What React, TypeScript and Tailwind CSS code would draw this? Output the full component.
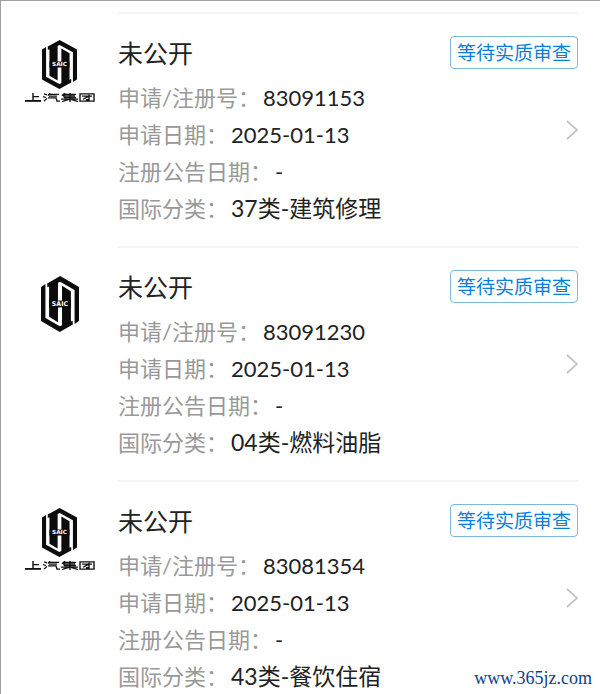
import React from "react";

type Trademark = {
  regNo: string;
  applyDate: string;
  noticeDate: string;
  category: string;
  withName: boolean;
};

const trademarks: Trademark[] = [
  { regNo: "83091153", applyDate: "2025-01-13", noticeDate: "-", category: "37类-建筑修理", withName: true },
  { regNo: "83091230", applyDate: "2025-01-13", noticeDate: "-", category: "04类-燃料油脂", withName: false },
  { regNo: "83081354", applyDate: "2025-01-13", noticeDate: "-", category: "43类-餐饮住宿", withName: true },
];

// Half of the emblem, the other half is the same shape turned by 180°
const HALF = "M17 20 L52 0 L103 29 V119 L91 127 V37 L52 15 L46 18 V122 L22 108 V28 L17 30 Z";

const Emblem = ({ className }: { className: string }) => (
  <svg viewBox="0 0 103 148" className={className} preserveAspectRatio="none" aria-hidden="true">
    <path d={HALF} fill="#0c0c0c" />
    <path d={HALF} fill="#0c0c0c" transform="rotate(180 51.5 74)" />
    <rect x="22" y="65" width="59" height="18" fill="#0c0c0c" />
    <text x="51.5" y="80" textAnchor="middle" fontSize="17" fontWeight="700" fontFamily="DejaVu Sans, sans-serif" fill="#fff">
      SAIC
    </text>
  </svg>
);

const Logo = ({ withName }: { withName: boolean }) =>
  withName ? (
    <div className="flex flex-col items-center pt-7">
      <Emblem className="h-[49px] w-[35px]" />
      <svg viewBox="0 0 70 10" className="mt-1 h-[9px] w-[70px]" preserveAspectRatio="none" role="img" aria-label="上汽集团">
        <g fill="none" stroke="#111" strokeWidth="1.4">
          <path d="M8 0V8M8 4H14" />
          <path d="M0 8.8H16" strokeWidth="2" />
          <path d="M19 1L22 2M18 4L21 5M19 9L22 6M25 0L23 3M24 1.5H34M24 3.5H32M23 5.5H31L32 9H35" />
          <path d="M40 0L37 3M39 1.5H51M39 3.2H50M39 5H51M39 1V5M45 0V10M36 6.8H53M44 7L37 9.5M46 7L53 9.5" />
          <path d="M55 1H69V9H55ZM57 3.5H67M64 2V7.5H61M63 4L58 7" />
        </g>
      </svg>
    </div>
  ) : (
    <div className="flex justify-center pt-[30px]">
      <Emblem className="h-14 w-[38px]" />
    </div>
  );

const Field = ({ label, value, wide = false }: { label: string; value: string; wide?: boolean }) => (
  <div className="flex h-[37px] items-center gap-[3px] text-[22px] leading-[37px]">
    <dt className="text-[#999]">{label}：</dt>
    <dd className={wide ? "text-[23px] text-[#222]" : "text-[#222]"}>{value}</dd>
  </div>
);

const TrademarkRow = ({ item }: { item: Trademark }) => (
  <li className="flex">
    <div className="w-[117px] shrink-0">
      <Logo withName={item.withName} />
    </div>
    <div className="mr-[22px] flex h-[234px] grow justify-between border-t-2 border-[#f5f5f5]">
      <div className="pt-[19px]">
        <h2 className="mb-1.5 text-[25px] leading-10 text-[#222]">未公开</h2>
        <dl>
          <Field label="申请/注册号" value={item.regNo} />
          <Field label="申请日期" value={item.applyDate} />
          <Field label="注册公告日期" value={item.noticeDate} />
          <Field label="国际分类" value={item.category} wide />
        </dl>
      </div>
      <div className="flex flex-col items-end pt-[22px]">
        <span className="rounded-[4px] border border-[#7db9de] px-1.5 text-[19px] leading-[31px] text-[#0a7fdc]">
          等待实质审查
        </span>
        <svg viewBox="0 0 12 20" className="mt-[51px] h-5 w-3" fill="none" stroke="#c4c4c4" strokeWidth="1.8">
          <path d="M1 1L11 10L1 19" />
        </svg>
      </div>
    </div>
  </li>
);

export default function App() {
  return (
    <main className="relative h-screen overflow-hidden border-t border-l border-[#a0a0a0] bg-white pt-[11px] font-[Lato,'Noto_Sans_CJK_SC',sans-serif]">
      <ul>
        {trademarks.map((item) => (
          <TrademarkRow key={item.regNo} item={item} />
        ))}
      </ul>
      <span className="absolute right-2 bottom-1 font-['Liberation_Serif',serif] text-[18px] leading-6 text-[#0d3f86]">
        www.365jz.com
      </span>
    </main>
  );
}
